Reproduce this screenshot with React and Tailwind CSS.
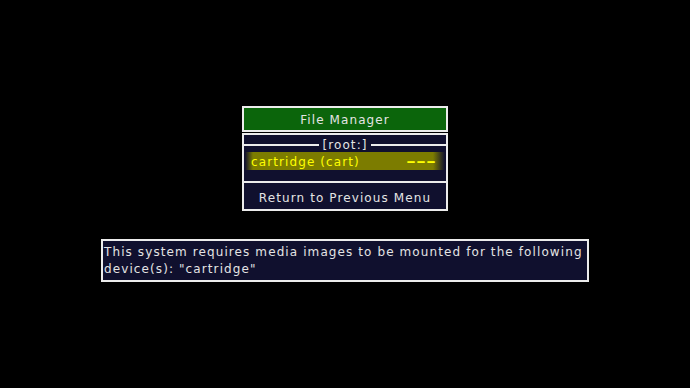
export default function App() {
    return (
        <div className="w-[690px] h-[388px] bg-black flex flex-col items-center pt-[106px] text-[12px] tracking-[1.1px] text-[#e4e4e4]" style={{ fontFamily: '"DejaVu Sans", sans-serif' }}>

            <div className="w-[206px]">
                <div className="h-[26px] border-2 border-[#ececec] bg-[#0b650b] flex items-center justify-center pt-[1px]">
                    File Manager
                </div>

                <div className="mt-[1px] h-[78px] border-2 border-[#ececec] bg-[#10102e] flex flex-col">
                    <div className="mt-[3px] h-[14px] flex items-center">
                        <div className="flex-1 h-[2px] bg-[#ececec]"></div>
                        <span className="px-[3px] leading-[14px]">[root:]</span>
                        <div className="flex-1 h-[2px] bg-[#ececec]"></div>
                    </div>

                    <div className="mx-[1px] h-[18px] flex items-center justify-between pl-[6px] pr-[9px] pt-[1px] text-[#ffff00] bg-[linear-gradient(to_right,transparent,#7c7c00_4%,#7c7c00_94%,transparent)]">
                        <span>cartridge (cart)</span>
                        <span className="inline-block scale-x-[2] origin-right tracking-[0px] font-bold">---</span>
                    </div>

                    <div className="mt-[11px] h-[2px] bg-[#ececec]"></div>

                    <div className="flex-1 flex items-center justify-center pt-[3px]">
                        Return to Previous Menu
                    </div>
                </div>
            </div>

            <div className="mt-[28px] w-[488px] h-[43px] border-2 border-[#ececec] bg-[#10102e] px-[1px] pt-[3px] leading-[17px]">
                This system requires media images to be mounted for the following device(s): "cartridge"
            </div>

        </div>
    )
}
